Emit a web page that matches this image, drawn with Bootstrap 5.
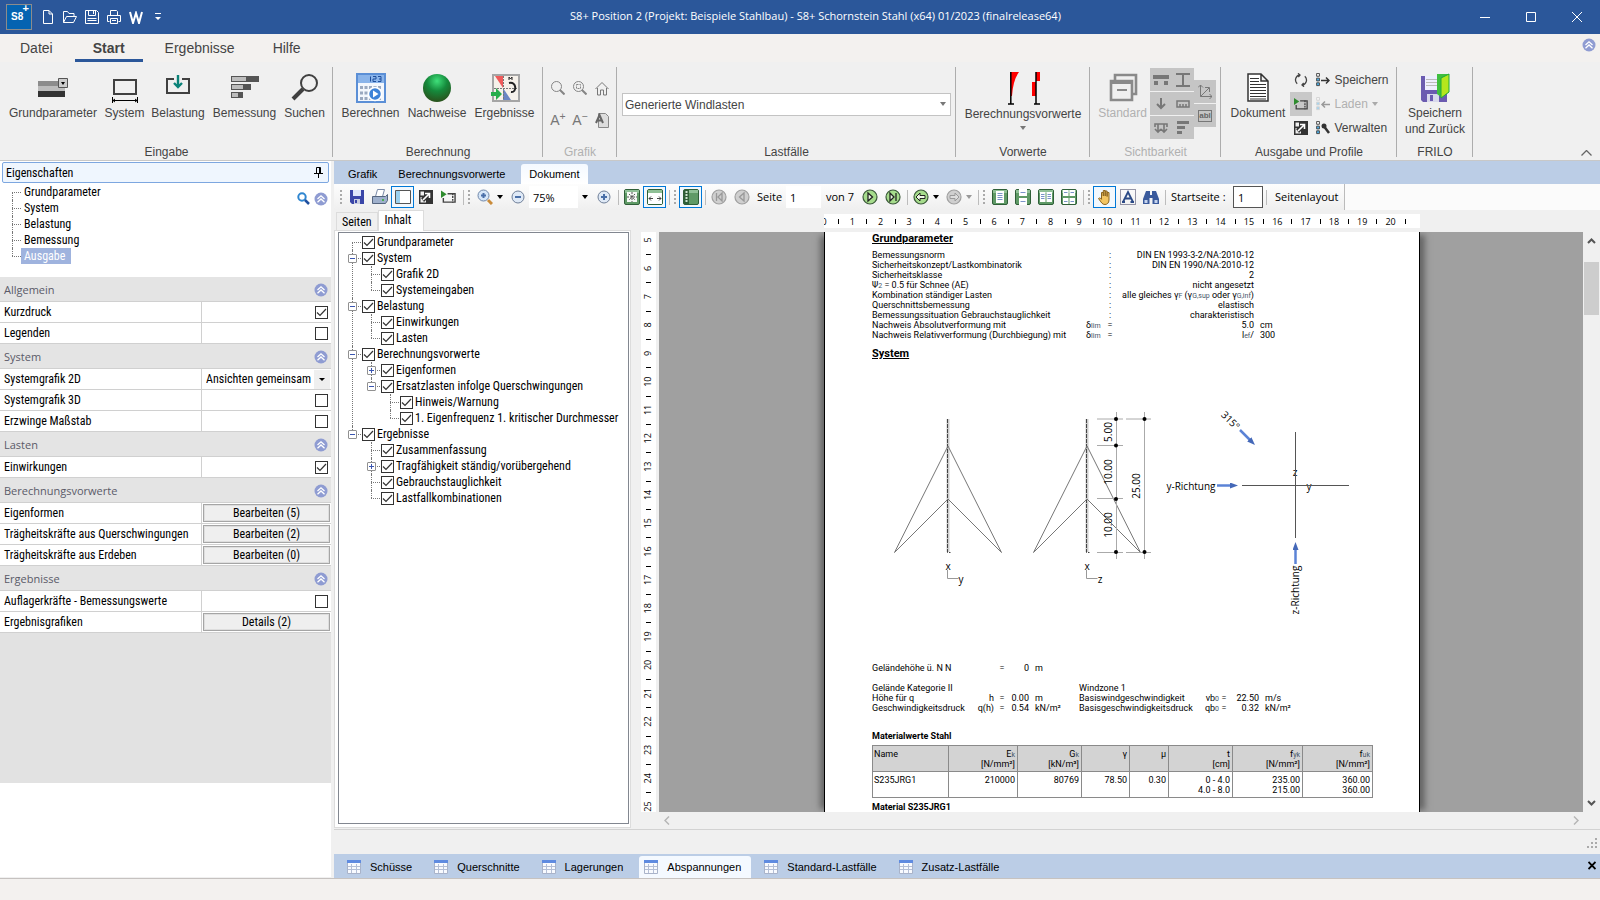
<!DOCTYPE html>
<html lang="de">
<head>
<meta charset="utf-8">
<meta name="viewport" content="width=device-width, initial-scale=1">
<title>S8+ Schornstein Stahl</title>
<link href="https://cdn.jsdelivr.net/npm/bootstrap@5.3.0/dist/css/bootstrap.min.css" rel="stylesheet">
<script src="https://cdn.jsdelivr.net/npm/bootstrap@5.3.0/dist/js/bootstrap.bundle.min.js" defer></script>
<style>
:root{--ui:"Roboto Condensed","Liberation Sans",sans-serif;--seg:"Open Sans","Noto Sans",sans-serif;--rib:"Liberation Sans",Arial,sans-serif}
body{background:#f0f0f0;color:#000;font:12px/16px var(--ui)}
svg{display:block;flex:none}
button{color:inherit;font:inherit}
a{color:inherit;text-decoration:none}
.plain{border:0;background:none;padding:0}
.chk{appearance:none;width:13px;height:13px;border:1px solid #333;background:#fff;margin:0;flex:none}
.chk:checked{background:#fff url("data:image/svg+xml,%3Csvg xmlns='http://www.w3.org/2000/svg' viewBox='0 0 11 11'%3E%3Cpath d='M1 5.5l3 3 6-6.5' fill='none' stroke='%23333' stroke-width='1.2'/%3E%3C/svg%3E")}
/* title */
.titlebar{height:34px;background:#2b579a;color:#fff}
.titlebar .plain{width:22px;height:22px;display:grid;place-items:center;color:#fff}
.app-logo{width:26px;height:26px;background:#0563b1;border:1px solid #8c8c8c;margin:0 5px 0 6px;font:bold 10px/24px var(--rib)}
.app-logo sup{position:absolute;right:2px;top:-3px;font-size:11px;line-height:12px}
.win-title{font:11px/32px var(--seg);height:34px}
.titlebar .win{width:46px;height:34px}
/* ribbon tabs */
.rtabs{height:28px;background:#f3f1ef;padding-left:4px;gap:6px;font:14px/28px var(--rib);color:#444}
.rtabs a{padding:0 16px;height:28px;position:relative}
.rtabs a.on{font-weight:bold;padding:0 18px;box-shadow:inset 0 -3px #2b579a}
/* ribbon */
.ribbon{height:99px;border-bottom:1px solid #c8c8c8;font:12px/16px var(--rib);color:#444}
.rgroup{display:flex;flex-direction:column;position:relative;padding-top:6px}
.rgroup::after{content:"";position:absolute;right:0;top:5px;height:90px;width:1px;background:#adadad}
.rbody{height:76px;display:flex;gap:6px;justify-content:center}
.rcap{text-align:center;line-height:16px}
.rbtn{border:0;background:none;padding:0;display:flex;flex-direction:column;align-items:center;white-space:nowrap}
.rbtn svg{margin:4px 0 1px}
.off{color:#b1b1b1}
.lf{height:23px;border:1px solid #c3c3c3;border-radius:0;background:#fff;color:#444;font:12px var(--rib);padding:0 2px;appearance:none}
.vis{display:grid;grid-template-columns:22px 22px;grid-auto-rows:23px;gap:1px 0;align-content:start}
.vis.single{grid-template-columns:22px;padding-top:12px}
.vis button{background:#c5c5c5;border:0;padding:0;display:grid;place-items:center}
.lines button{height:24px;border:0;background:none;padding:0;display:flex;align-items:center;gap:4px}
/* left panel */
.side{width:331px;background:#fff;margin-bottom:1px}
.side-head{height:21px;margin:1px 2px;border:1px solid #7da7e0;border-radius:2px;background:#eff6fe;padding:0 5px 0 3px}
.nodes,.nodes ul{list-style:none;margin:0;padding:0}
.nodes ul{margin-left:19px}
.nodes li{position:relative;line-height:16px}
.nodes li::before{content:"";position:absolute;left:0;top:8px;width:9px;border-top:1px dotted #777}
.nodes li::after{content:"";position:absolute;left:0;top:0;bottom:0;border-left:1px dotted #777}
.nodes li:last-child::after{bottom:auto;height:8px}
.nodes>li:first-child::after{top:8px}
.nodes label{display:flex;align-items:center;height:16px;padding-left:10px;gap:2px;white-space:nowrap}
.tgl{position:absolute;left:-4px;top:4px;width:9px;height:9px;border:1px solid #919191;border-radius:1px;background:#fff;padding:0;z-index:1}
.tgl::before{content:"";position:absolute;left:1px;top:3px;width:5px;height:1px;background:#3a55b0}
.tgl.plus::after{content:"";position:absolute;left:3px;top:1px;width:1px;height:5px;background:#3a55b0}
.side-tree a{display:inline-block;margin-left:9px;padding:0 6px 0 3px}
.side-tree a.on{background:#9fb3de;color:#fff}
.ghead{height:25px;background:#e4e4e4;border-bottom:1px solid #d0d0d0;padding:1px 3px 0 4px;font:11px/24px var(--seg);color:#5a5a68}
.prow{height:21px;border-bottom:1px solid #d0d0d0}
.pname{width:202px;border-right:1px solid #d0d0d0;padding-left:4px;line-height:20px}
.pval{display:flex;align-items:center;justify-content:flex-end;padding:1px}
.pval .chk{margin-right:2px}
.pval button{width:100%;height:18px;border:1px solid #a5a5a5;background:#efefef;box-shadow:inset 0 0 0 1px #dedede;padding:0;line-height:16px}
.pval select{appearance:none;border:0;width:100%;height:19px;padding:0 0 0 3px;font:12px var(--ui);background:#fff url("data:image/svg+xml,%3Csvg xmlns='http://www.w3.org/2000/svg' viewBox='0 0 16 19'%3E%3Cpath fill='%23efefef' d='M0 0h16v19H0z'/%3E%3Cpath d='M5 8h6l-3 3z'/%3E%3C/svg%3E") right/16px 19px no-repeat}
.side-rest{height:150px;background:#e2e2e2}
/* work area */
.dtabs{height:23px;background:#bbcde6;padding:3px 0 0 6px;font:11px/20px var(--rib)}
.dtabs a{padding:0 8px;margin-right:7px}
.dtabs a.on{background:linear-gradient(#f4f9ff,#fff);border-radius:3px 3px 0 0;margin:0 0 0 1px}
.tbar{height:26px;width:1011px;background:linear-gradient(#fdfdfd,#efefef);border-right:1px solid #bbb;font:11px/24px var(--seg);padding-left:6px;white-space:nowrap}
.tbar>*{flex:none}
.tstrip{background:#fbfbfb}
.ti{width:23px;height:22px;border:0;background:none;padding:0;display:grid;place-items:center}
.ti.on{border:1px solid #0078d7;background:#f2f8fd}
.grip{width:2px;height:15px;background:repeating-linear-gradient(#aaa 0 2px,transparent 2px 4px);margin:0 3px}
.bar{width:1px;height:15px;background:#bcbcbc;margin-left:3px;margin-right:1px}
.tc{margin:0 3px 0 1px}
.tin{border:0;background:#fff;height:22px;padding:0 4px;font:11px var(--seg)}
.cpane{width:298px;padding:0 1px 1px 0}
.ctabs{height:20px;padding-left:2px;align-items:flex-end}
.ctabs a{border:1px solid #dcdcdc;border-bottom:0;padding:0 5px;height:18px;line-height:18px}
.ctabs a.on{background:#fff;padding:0 12px 0 6px;margin-bottom:-1px;z-index:1;height:21px}
.cbox{border:1px solid #dcdcdc;background:#fff;padding:1px 1px 3px 3px}
.cinner{height:100%;border:1px solid #828790;padding:1px 0 0 13px}
.prev{display:grid;grid-template-columns:15px minmax(0,1fr) 17px;grid-template-rows:22px minmax(0,1fr) 17px;column-gap:0;margin-left:9px}
.prev text{font:9px var(--seg)}
.view{background:#a0a0a0;overflow:hidden;margin-left:3px;padding-left:2px}
.sheet{width:596px;margin:0 auto;background:#fff;border:solid #000;border-width:0 1px;box-shadow:8px 0 6px -3px #666,-8px 0 6px -4px #666;padding:1px 47px 0;min-height:100%;font:9px/10px Roboto,sans-serif}
.sheet h2{font:bold 11px/12px Roboto,sans-serif;text-decoration:underline;margin:0}
.sheet h3{font:bold 9px/12px Roboto,sans-serif;margin:0}
.sheet table{table-layout:fixed;border-collapse:collapse}
.sheet td,.sheet th{padding:0;white-space:nowrap;font-weight:400;vertical-align:top;height:10px}
.sheet sub{font-size:7px;line-height:0;color:#456;bottom:0}
.mat{width:500px}
.sheet .mat th,.sheet .mat td{border:1px solid #8a8a8a;padding:3px 2px 1px;height:26px;text-align:right}
.sheet .mat th{background:#d3d3d3}
.sheet .mat th:first-child,.sheet .mat td:first-child{text-align:left;padding-left:1px}
.dia text{font:10px var(--seg)}
.thumb{height:53px;background:#cdcdcd;margin:0 1px;width:15px}
.btabs{height:24px;background:#bbcde6;padding-left:2px;font:11px/22px var(--rib)}
.btabs a{display:flex;align-items:center;gap:9px;padding:0 11px 0 11px;height:22px}
.btabs a.on{background:#f4f9ff;border-radius:3px 3px 0 0;padding:0 10px 0 5px;margin:0 2px 0 5px}
.statusbar{height:22px;border-top:1px solid #c6c2c0;background:#f3f1ef}
</style>
</head>
<body class="vh-100 d-flex flex-column overflow-hidden">
<svg width="0" height="0" class="position-absolute">
<symbol id="up" viewBox="0 0 14 14"><circle cx="7" cy="7" r="6.500" fill="#8f9cd2"/><path d="M3.500 7L7 3.800 10.500 7M3.500 10.300L7 7l3.500 3.300" fill="none" stroke="#fff" stroke-width="1.300"/></symbol>
<symbol id="tab" viewBox="0 0 14 14"><path fill="#f8fafe" stroke="#a9b3c9" d="M.5.5h13v13H.5z"/><path fill="#5f8be0" d="M0 0h14v3H0z"/><path stroke="#b4bfd6" d="M1 6.500h12M1 9.500h12M4.500 4v9M9.500 4v9"/></symbol>
<symbol id="disk" viewBox="0 0 14 14"><path fill="#3a46a8" d="M0 0h14v14H2l-2-2z"/><path fill="#dfe6fa" d="M3 0h8v6H3z"/><path fill="#c9cde0" d="M4 9h6v5H4z"/><path fill="#3a46a8" d="M5 10h2v3H5z"/></symbol>
<symbol id="expand" viewBox="0 0 14 14"><path fill="#333" d="M0 0h14v14H0z"/><path fill="#f0f0f0" d="M1.500 1.500H5v4H1.500zM1.500 7H7v5.500H1.500z"/><path fill="#333" d="M2 8l4-3 3 3-4 4z"/><path d="M4 10l6-6M6 3.500h4.500V8" fill="none" stroke="#fff" stroke-width="1.600"/></symbol>
<symbol id="film" viewBox="0 0 16 14"><path d="M7 3.500h8v9H2.500V8" fill="none" stroke="#444" stroke-width="1.500"/><path stroke="#444" stroke-dasharray="2 1" stroke-width="1.500" d="M12.500 3v10"/><path fill="#2e8b2e" d="M0 0l6 4-6 4z"/></symbol>
<symbol id="gsq" viewBox="0 0 16 16"><rect x=".5" y=".5" width="15" height="15" rx="1.500" fill="#5f9a66" stroke="#2f5f38"/><path fill="#8fc096" d="M1 1h14v3H1z"/></symbol>
<symbol id="gc" viewBox="0 0 16 16"><circle cx="8" cy="8" r="7" fill="#a6dc8c" stroke="#3c5a3a" stroke-width="1.200"/></symbol>
<symbol id="nc" viewBox="0 0 16 16"><circle cx="8" cy="8" r="7" fill="#cfcfcf" stroke="#a0a0a0" stroke-width="1.200"/></symbol>
<symbol id="list3" viewBox="0 0 5 15"><path d="M.5.5h3v3h-3z" fill="#fff" stroke="currentColor"/><path d="M.5 5.500h3v3h-3zM.5 10.500h3v3h-3z" fill="#4db2ec" stroke="currentColor"/></symbol>
</svg>

<header class="titlebar d-flex align-items-center position-relative flex-shrink-0">
<div class="app-logo position-relative ps-1">S8<sup>+</sup></div>
<button class="plain" aria-label="Neu"><svg width="12" height="16" fill="none" stroke="#fff"><path d="M1.500 1.500H7L10.500 5v9.500h-9zM7 1.500V5h3.500"/></svg></button>
<button class="plain" aria-label="Öffnen"><svg width="16" height="14" fill="none" stroke="#fff"><path d="M1.500 12.500v-11h4L7 3.500h5v3M1.500 12.500l3-6h10l-3 6z"/></svg></button>
<button class="plain" aria-label="Sichern"><svg width="16" height="16" fill="none" stroke="#fff"><path d="M1.500 1.500h11l2 2v11h-13zM4.500 1.500v5h7v-5M9.500 2v3M3.500 9.500h9M3.500 11.500h9"/></svg></button>
<button class="plain" aria-label="Drucken"><svg width="16" height="16" fill="none" stroke="#fff"><path d="M4.500 6.500v-5h6l1 1v4M3.500 12.500h-2v-6h13v6h-2M4.500 9.500h7v5h-7zM6 11.500h4"/></svg></button>
<button class="plain" aria-label="Word"><svg width="14" height="13" fill="none" stroke="#fff" stroke-width="2"><path d="M1 1l3 11L7 2l3 10 3-11"/></svg></button>
<button class="plain" aria-label="Anpassen"><svg width="6" height="8" fill="#fff"><path d="M0 0h6v1H0zM0 4h6L3 7z"/></svg></button>
<div class="win-title flex-grow-1 text-center">S8+ Position 2 (Projekt: Beispiele Stahlbau) - S8+ Schornstein Stahl (x64) 01/2023 (finalrelease64)</div>
<button class="plain win" aria-label="Minimieren"><svg width="10" height="10"><path stroke="#fff" d="M0 5.500h10"/></svg></button>
<button class="plain win" aria-label="Maximieren"><svg width="10" height="10"><path stroke="#fff" fill="none" d="M.5.5h9v9h-9z"/></svg></button>
<button class="plain win" aria-label="Schließen"><svg width="10" height="10"><path stroke="#fff" d="M0 0l10 10M10 0L0 10"/></svg></button>
</header>

<nav class="rtabs d-flex flex-shrink-0 align-items-start">
<a href="#">Datei</a><a href="#" class="on">Start</a><a href="#">Ergebnisse</a><a href="#">Hilfe</a>
<button class="plain ms-auto me-1 mt-1" aria-label="Menüband"><svg width="14" height="14"><use href="#up"/></svg></button>
</nav>

<section class="ribbon d-flex flex-shrink-0 position-relative">
<div class="rgroup" style="width:333px"><div class="rbody">
<button class="rbtn" style="width:91px"><svg width="32" height="32"><path fill="#8c8c8c" d="M1 9h27v5H1z"/><path fill="#bcbcbc" d="M1 14h27v5H1z"/><path fill="#333" d="M1 19h27v6H1z"/><path fill="#ccc" stroke="#555" d="M21.500 6.500h9v9h-9z"/><path d="M24 10h4l-2 3z"/></svg>Grundparameter</button>
<button class="rbtn" style="width:40px"><svg width="32" height="32"><path fill="none" stroke="#404040" stroke-width="2" d="M5 8h22v14H5z"/><path stroke="#000" fill="none" d="M3 28.500h26M3.500 25v6M28.500 25v6M6 27l-2 1.500L6 30M26 27l2 1.500-2 1.500"/></svg>System</button>
<button class="rbtn" style="width:55px"><svg width="32" height="32"><path fill="none" stroke="#404040" stroke-width="2" d="M12 7H5v14h22V7h-7"/><path stroke="#0a8278" stroke-width="2.400" fill="none" d="M16 3v12M12 11l4 4 4-4"/></svg>Belastung</button>
<button class="rbtn" style="width:66px"><svg width="32" height="32"><path fill="#555" d="M2 4h28v6H2zM2 12h20v6H2zM2 20h12v6H2z"/><path fill="#bdbdbd" d="M3 5h14v4H3zM3 13h11v4H3zM3 21h6v4H3z"/></svg>Bemessung</button>
<button class="rbtn" style="width:42px"><svg width="32" height="32"><circle cx="20" cy="11" r="8" fill="none" stroke="#404040" stroke-width="2"/><path stroke="#404040" stroke-width="4" d="M14 17L4 27"/></svg>Suchen</button>
</div><div class="rcap">Eingabe</div></div>

<div class="rgroup" style="width:210px"><div class="rbody">
<button class="rbtn" style="width:60px"><svg width="32" height="32"><path fill="#f3f7fd" stroke="#5b8fd6" stroke-width="2" d="M2 2h28v28H2z"/><path fill="#8ab4ea" d="M3 3h26v8H3z"/><path stroke="#1f4f9c" fill="none" d="M15.500 9.500v-5M18 4.500h3v2.500h-3v2.500h3M23 4.500h3v5h-3M24 7h2"/><path stroke="#9aa9c0" stroke-width="3" stroke-dasharray="3 1.500" d="M5 15.500h22M5 21h22M5 26.500h22"/><circle cx="20" cy="22" r="6.500" fill="#3e83d8" stroke="#fff" stroke-width="1.500"/><path fill="#fff" d="M18 18.500l5.500 3.500-5.500 3.500z"/></svg>Berechnen</button>
<button class="rbtn" style="width:61px"><svg width="32" height="32"><defs><radialGradient id="gg" cx=".5" cy=".25" r=".8"><stop offset="0" stop-color="#3fe07a"/><stop offset=".45" stop-color="#158a3c"/><stop offset="1" stop-color="#2c4a18"/></radialGradient></defs><circle cx="16" cy="16" r="14" fill="url(#gg)"/></svg>Nachweise</button>
<button class="rbtn" style="width:62px"><svg width="32" height="32"><path fill="#f6f1ea" stroke="#a5a5a5" stroke-width="2" d="M4 3h26v26H4z"/><path fill="#ef5a5a" d="M6 4h8v12z"/><path fill="#6a86c4" d="M14 16v12h8z"/><path stroke="#777" stroke-dasharray="2 1" d="M5 16.500h24M14.500 4v24"/><path stroke="#222" stroke-width="2" fill="none" d="M20 11c8-2 8 10 2 9"/><path stroke="#222" fill="none" d="M20 8V5l1.500 2L23 5v3"/><path fill="#27ae4c" d="M2 20h5v-4l6 6-6 6v-4H2z"/></svg>Ergebnisse</button>
</div><div class="rcap">Berechnung</div></div>

<div class="rgroup off" style="width:74px"><div class="rbody">
<div class="d-grid" style="grid-template:32px 32px/22px 22px 22px;place-items:center;padding-top:4px;height:68px">
<button class="plain" aria-label="Zoom"><svg width="14" height="14" fill="none" stroke="#858585"><circle cx="5.500" cy="5.500" r="5"/><path stroke-width="2" d="M9 9l4.500 4.500"/></svg></button>
<button class="plain" aria-label="Zoom Fenster"><svg width="14" height="14" fill="none" stroke="#858585"><circle cx="5.500" cy="5.500" r="5"/><path stroke-width="2" d="M9 9l4.500 4.500"/><path stroke-dasharray="2 1" d="M3.500 3.500h4v4h-4z"/></svg></button>
<button class="plain" aria-label="Alles"><svg width="14" height="15" fill="none" stroke="#777"><path d="M.5 8L7 1.500 13.500 8M2.500 7v7h3V9h3v5h3V7"/></svg></button>
<button class="plain" aria-label="Schrift größer" style="color:#777;font-size:14px;line-height:16px">A<sup>+</sup></button>
<button class="plain" aria-label="Schrift kleiner" style="color:#777;font-size:14px;line-height:16px">A<sup>−</sup></button>
<button class="plain" aria-label="Schrift"><svg width="14" height="15"><path fill="#ddd" stroke="#888" d="M3.500.5h7l3 3v11h-10z"/><path d="M1 10l3.500-8L8 10M2.500 7.500h4" fill="none" stroke="#666" stroke-width="2"/></svg></button>
</div></div><div class="rcap">Grafik</div></div>

<div class="rgroup flex-grow-1"><div class="rbody px-1">
<div class="w-100 position-relative" style="padding:25px 1px 0 1px"><select class="lf w-100" aria-label="Lastfälle"><option>Generierte Windlasten</option></select><svg class="position-absolute" style="right:6px;top:34px" width="6" height="4" fill="#777"><path d="M0 0h6L3 4z"/></svg></div>
</div><div class="rcap">Lastfälle</div></div>

<div class="rgroup" style="width:134px"><div class="rbody">
<button class="rbtn"><svg width="34" height="33"><path fill="red" d="M5 0h8q-6 8-7 24H5z"/><path fill="red" d="M26 10h4v14h-4zM30 0h4v9h-4z"/><path stroke="#000" stroke-width="1.500" d="M4.800 0v32M2 32h6M30 0v32M28 32h6"/></svg>Berechnungsvorwerte<svg class="mt-1" width="6" height="4" fill="#777"><path d="M0 0h6L3 4z"/></svg></button>
</div><div class="rcap">Vorwerte</div></div>

<div class="rgroup off" style="width:131px"><div class="rbody" style="gap:0">
<button class="rbtn off" style="width:55px"><svg width="32" height="32" fill="none" stroke="#8a8a8a" stroke-width="2.600"><path d="M8 8V3h21v19h-5"/><path fill="#f0f0f0" d="M4 9h21v19H4z"/><path d="M4 11h21M10 18h10" stroke-width="2"/></svg>Standard</button>
<div class="vis">
<button aria-label="Lager"><svg width="16" height="12" fill="#777"><path d="M0 1h16v4H0zM1 7h4v4H1zM11 7h4v4h-4z"/></svg></button>
<button aria-label="Profil"><svg width="16" height="16" fill="none" stroke="#777" stroke-width="2"><path d="M1 2h14M1 14h14M8 2v12"/></svg></button>
<button aria-label="Last"><svg width="10" height="12" fill="none" stroke="#777" stroke-width="2"><path d="M5 0v10M1 6l4 4 4-4"/></svg></button>
<button aria-label="Maß"><svg width="14" height="8" fill="none" stroke="#777" stroke-width="1.500"><path d="M1 1h12v6H1zM4 4v3M7 4v3M10 4v3"/></svg></button>
<button aria-label="Auflager"><svg width="14" height="12" fill="none" stroke="#777" stroke-width="1.600"><path d="M4 11V2h6v9M1 7l3 3 3-3M7 7l3 3 3-3M1 5V2h3M13 5V2h-3"/></svg></button>
<button aria-label="Balken"><svg width="12" height="13" fill="#777"><path d="M0 0h12v3H0zM0 5h8v3H0zM0 10h5v3H0z"/></svg></button>
</div>
<div class="vis single">
<button aria-label="Achsen"><svg width="14" height="14" fill="none" stroke="#777"><path d="M2.500 0v11.500H14M2.500 11.500L11 3M7 2.500h4.500V7M0 2.500L2.500 0 5 2.500M11.500 9l2.500 2.500-2.500 2.500"/></svg></button>
<button aria-label="Text"><span style="border:1px solid #777;font:bold 8px/10px var(--rib);color:#666">abl</span></button>
</div>
</div><div class="rcap">Sichtbarkeit</div></div>

<div class="rgroup" style="width:176px"><div class="rbody" style="gap:0">
<button class="rbtn" style="width:57px"><svg width="32" height="32"><path fill="#fff" stroke="#333" stroke-width="1.500" d="M6 2h13l7 7v20H6zM19 2v7h7"/><path stroke="#333" d="M8 6.500h9M8 9.500h9M8 12.500h16M8 15.500h16M8 18.500h16M8 21.500h16M8 24.500h16M8 27h16"/></svg>Dokument</button>
<div class="lines mx-1">
<button class="px-1" aria-label="Aktualisieren"><svg width="14" height="14" fill="none" stroke="#444" stroke-width="1.300"><path d="M5.500 1.800a5.300 5.300 0 0 0-2.300 9M8.500 12.200a5.300 5.300 0 0 0 2.300-9M4 .3l2 1.700L4.300 4M10 13.700L8 12l1.700-2"/></svg></button>
<button class="px-1" aria-label="Vorschau" style="background:#c8c8c8"><svg width="14" height="14"><use href="#film"/></svg></button>
<button class="px-1" aria-label="Vollbild"><svg width="14" height="14"><use href="#expand"/></svg></button>
</div>
<div class="lines">
<button><svg width="14" height="14"><use href="#list3" width="5" height="14"/><path d="M5 7.500h8M10 4.500l3 3-3 3" fill="none" stroke="#333" stroke-width="1.500"/></svg>Speichern</button>
<button class="off"><svg width="14" height="14" opacity=".45"><use href="#list3" width="5" height="14"/><path d="M14 7.500H6M9 4.500l-3 3 3 3" fill="none" stroke="#333" stroke-width="1.500"/></svg>Laden<svg width="6" height="4" fill="#aaa"><path d="M0 0h6L3 4z"/></svg></button>
<button><svg width="14" height="14"><use href="#list3" width="5" height="14"/><path d="M7 4l6 8" stroke="#333" stroke-width="2.500"/><circle cx="8" cy="5" r="2.500" fill="#333"/></svg>Verwalten</button>
</div>
</div><div class="rcap">Ausgabe und Profile</div></div>

<div class="rgroup" style="width:76px"><div class="rbody">
<button class="rbtn"><svg width="32" height="32"><path fill="#6b5bb0" d="M2 4h26v26H4l-2-2z"/><path fill="#eef" d="M6 4h14v14H6z"/><path stroke="#bbb" d="M7 7.500h12M7 10.500h12M7 13.500h12"/><path fill="#d8d8ec" d="M8 22h12v8H8z"/><path fill="#6b5bb0" d="M11 23h3v6h-3z"/><path fill="#3fbf3f" d="M18 2h12v18l-8 5-4-3z"/><path fill="#b5e61d" stroke="#1faa3a" d="M22 6l8-4v18l-8 6z"/></svg>Speichern<span>und Zurück</span></button>
</div><div class="rcap">FRILO</div></div>
<div style="width:127px" class="d-flex align-items-end justify-content-end pe-2 pb-1"><svg width="11" height="6" fill="none" stroke="#666" stroke-width="1.300"><path d="M.5 5.500l5-5 5 5"/></svg></div>
</section>

<main class="d-flex flex-grow-1" style="min-height:0">
<aside class="side flex-shrink-0">
<div class="side-head d-flex align-items-center justify-content-between">Eigenschaften<svg width="9" height="11" fill="none" stroke="#000"><path d="M2.500 6V.5h4V6M0 6.500h9M4.500 7v4M5.500 1v5"/></svg></div>
<div class="d-flex" style="height:93px;padding:0 3px 0 12px">
<ul class="nodes side-tree flex-grow-1"><li><a href="#">Grundparameter</a></li><li><a href="#">System</a></li><li><a href="#">Belastung</a></li><li><a href="#">Bemessung</a></li><li><a href="#" class="on">Ausgabe</a></li></ul>
<div class="d-flex gap-1 pt-1 mt-1 align-items-start"><svg width="13" height="13" fill="none"><circle cx="5" cy="5" r="3.700" stroke="#2f86d0" stroke-width="2"/><path d="M8 8l4 4" stroke="#1f4fa0" stroke-width="2.500"/></svg><svg width="14" height="14"><use href="#up"/></svg></div>
</div>
<div id="props"></div>
<div class="side-rest"></div>
</aside>

<div class="d-flex flex-column flex-grow-1" style="margin-left:3px;min-width:0">
<nav class="dtabs d-flex"><a href="#" class="ps-2">Grafik</a><a href="#" style="padding-left:6px">Berechnungsvorwerte</a><a href="#" class="on">Dokument</a></nav>
<div class="tstrip"><div class="tbar d-flex align-items-center">
<i class="grip ms-0"></i>
<button class="ti" aria-label="Speichern"><svg width="14" height="14"><use href="#disk"/></svg></button>
<button class="ti" aria-label="Drucken"><svg width="16" height="16"><path fill="#fff" stroke="#7a8aa8" d="M5.500.5h7l-2 7h-7z"/><path fill="#9fb0cc" stroke="#55657f" d="M.5 7.500h13l2-2v6l-2 3H.5z"/><path fill="#4caf50" d="M10 10h2v2h-2z"/></svg></button>
<button class="ti on" aria-label="Navigation"><svg width="16" height="14"><path fill="#fff" stroke="#555" d="M.5.5h15v13H.5z"/><path fill="#9ad0ee" d="M1 1h4v12H1z"/></svg></button>
<button class="ti" aria-label="Vollbild"><svg width="14" height="14"><use href="#expand"/></svg></button>
<button class="ti" aria-label="Vorschau"><svg width="15" height="14"><use href="#film"/></svg></button>
<i class="bar"></i><i class="grip"></i>
<button class="ti" aria-label="Zoom"><svg width="16" height="16"><circle cx="6.500" cy="6.500" r="5.500" fill="#d6e6f8" stroke="#6f86a8"/><path stroke="#4a6fa8" stroke-width="2" d="M4 6.500h5M6.500 4v5"/><path stroke="#c98b3a" stroke-width="3" d="M11 11l4 4"/></svg></button>
<svg class="tc" width="6" height="4"><path d="M0 0h6L3 4z"/></svg>
<button class="ti" aria-label="Kleiner"><svg width="14" height="14"><circle cx="7" cy="7" r="6" fill="#dfe9f6" stroke="#6f7f98"/><path stroke="#4a6fa8" stroke-width="2" d="M4 7h6"/></svg></button>
<input class="tin" style="width:49px" value="75%" aria-label="Zoomfaktor">
<svg class="mx-1" width="6" height="4"><path d="M0 0h6L3 4z"/></svg>
<button class="ti" aria-label="Größer"><svg width="14" height="14"><circle cx="7" cy="7" r="6" fill="#dfe9f6" stroke="#6f7f98"/><path stroke="#4a6fa8" stroke-width="2" d="M4 7h6M7 4v6"/></svg></button>
<i class="bar"></i>
<button class="ti" aria-label="Ganze Seite"><svg width="16" height="16"><use href="#gsq"/><path fill="#f4f8f4" d="M3 3h10v10H3z"/><path stroke="#555" fill="none" stroke-dasharray="2 1" d="M8 3v10M3 8h10M5 5l6 6M11 5l-6 6"/></svg></button>
<button class="ti on" aria-label="Seitenbreite"><svg width="16" height="16"><use href="#gsq"/><path fill="#fff" d="M1 4h14v11H1z"/><path fill="none" stroke="#444" d="M2 9.500h4M4 7.500l-2 2 2 2M14 9.500h-4M12 7.500l2 2-2 2"/></svg></button>
<i class="bar"></i><i class="grip"></i>
<button class="ti on" aria-label="Miniaturen"><svg width="16" height="16"><use href="#gsq"/><path fill="#2f5f38" d="M1 1h5v14H1z"/><path stroke="#cfe6d2" stroke-width="2" stroke-dasharray="2 1" d="M3.500 2v12"/></svg></button>
<i class="bar"></i>
<button class="ti" aria-label="Erste"><svg width="16" height="16"><use href="#nc"/><path fill="none" stroke="#999" stroke-width="1.300" d="M5.500 4v8M11 4v8L7 8z"/></svg></button>
<button class="ti" aria-label="Zurück"><svg width="16" height="16"><use href="#nc"/><path fill="none" stroke="#999" stroke-width="1.300" d="M10 4v8L5.500 8z"/></svg></button>
<label for="pg" style="width:33px;padding-left:4px">Seite</label><input id="pg" class="tin" style="width:35px" value="1">
<span style="width:37px;padding-left:5px">von 7</span>
<button class="ti" aria-label="Weiter"><svg width="16" height="16"><use href="#gc"/><path fill="#e8f8e0" stroke="#222" stroke-width="1.300" d="M6 4v8l4.500-4z"/></svg></button>
<button class="ti" aria-label="Letzte"><svg width="16" height="16"><use href="#gc"/><path fill="#e8f8e0" stroke="#222" stroke-width="1.300" d="M5 4v8l4-4zM11 4v8"/></svg></button>
<i class="bar"></i>
<button class="ti" aria-label="Vorige Ansicht"><svg width="16" height="16"><use href="#gc"/><path fill="#f0fbe8" stroke="#222" d="M3 8l4-4v2.500h5v3H7V12z"/></svg></button>
<svg class="tc" width="6" height="4"><path d="M0 0h6L3 4z"/></svg>
<button class="ti" aria-label="Nächste Ansicht"><svg width="16" height="16"><use href="#nc"/><path fill="#ddd" stroke="#999" d="M13 8L9 4v2.500H4v3h5V12z"/></svg></button>
<svg class="tc" width="6" height="4" fill="#999"><path d="M0 0h6L3 4z"/></svg>
<i class="bar"></i><i class="grip"></i>
<button class="ti" aria-label="Einzelseite"><svg width="16" height="16"><use href="#gsq"/><path fill="#fff" d="M4 2h8v12H4z"/><path stroke="#7a94c8" d="M5.500 4.500h5M5.500 6.500h5M5.500 8.500h5M5.500 10.500h5"/></svg></button>
<button class="ti" aria-label="Fortlaufend"><svg width="16" height="16"><use href="#gsq"/><path fill="#fff" d="M4 0h8v7H4zM4 9h8v7H4z"/><path stroke="#7a94c8" d="M5.500 3.500h5M5.500 12.500h5"/></svg></button>
<button class="ti" aria-label="Doppelseite"><svg width="16" height="16"><use href="#gsq"/><path fill="#fff" d="M2 3h5.500v10H2zM8.500 3H14v10H8.500z"/><path stroke="#7a94c8" d="M3 5.500h3.500M3 7.500h3.500M3 9.500h3.500M9.500 5.500H13M9.500 7.500H13M9.500 9.500H13"/></svg></button>
<button class="ti" aria-label="Doppelt fortlaufend"><svg width="16" height="16"><use href="#gsq"/><path fill="#fff" d="M2 1h5.500v6H2zM8.500 1H14v6H8.500zM2 9h5.500v6H2zM8.500 9H14v6H8.500z"/><path stroke="#7a94c8" d="M3 3.500h3.500M9.500 3.500H13M3 12.500h3.500M9.500 12.500H13"/></svg></button>
<i class="bar"></i><i class="grip"></i>
<button class="ti on" aria-label="Hand"><svg width="15" height="16"><path fill="#f3c562" stroke="#8a6420" d="M4.500 9V3.500h1.800V7 1.500h1.900V7 2h1.900v5.500V3.500H12V11c0 3-2 4.500-4 4.500-3 0-3.500-2-6.500-6 1-1 2-.5 3 .8z"/></svg></button>
<button class="ti" aria-label="Textauswahl"><svg width="16" height="16"><path fill="none" stroke="#335" stroke-dasharray="1 1" d="M.5.5h15v15H.5z"/><path fill="none" stroke="#2b4a86" stroke-width="1.800" d="M3 13L8 3l5 10M5 9.500h6M2 13h3M10.500 13H14"/></svg></button>
<button class="ti" aria-label="Suchen"><svg width="16" height="14" fill="#3a5a9c"><path d="M3 1h4v4h2V1h4l3 8v5H9.500V8h-3v6H0V9z"/><path fill="#c5d4ee" d="M1.500 10h3v3h-3zM11.500 10h3v3h-3z"/></svg></button>
<i class="bar"></i>
<label for="st" style="width:66px;padding-left:4px">Startseite :</label><input id="st" class="tin" style="width:30px;border:1px solid #555" value="1">
<i class="bar"></i><button class="plain" style="padding-left:7px">Seitenlayout</button>
</div></div>

<div class="d-flex flex-grow-1 border-bottom" style="min-height:0;border-color:#d2d2d2!important">
<div class="cpane d-flex flex-column flex-shrink-0">
<nav class="ctabs d-flex"><a href="#">Seiten</a><a href="#" class="on">Inhalt</a></nav>
<div class="cbox flex-grow-1"><div class="cinner">
<ul class="nodes" id="toc"></ul>
</div></div>
</div>
<div class="prev flex-grow-1">
<div></div><div style="padding:4px 0 4px 5px"><svg id="hr" class="mx-auto bg-white" width="596" height="14"></svg></div><div></div>
<svg id="vr" class="bg-white" width="15" height="100%"></svg>
<div class="view"><article class="sheet">
<h2>Grundparameter</h2>
<table style="width:500px;margin:5px 0 8px"><colgroup><col style="width:214px"><col style="width:18px"><col style="width:12px"><col style="width:138px"><col></colgroup>
<tbody id="gp"></tbody></table>
<h2>System</h2>
<svg class="dia" width="500" height="303" viewBox="872 360 500 303">
<defs><marker id="ah" markerWidth="8" markerHeight="8" refX="1" refY="3" orient="auto" markerUnits="userSpaceOnUse"><path d="M0 0l8 3-8 3z" fill="#4468b8"/></marker></defs>
<g id="mast" fill="none" stroke="#777"><path stroke="#ccc" stroke-width="3" d="M948 419v133"/><path stroke="#444" stroke-dasharray="4 1" d="M947.500 419v133.500h3"/><path d="M948 446l-53.500 106.500L948 499l53.500 53.500z"/><path stroke="#999" d="M947.500 570v8.500h11"/></g>
<use href="#mast" x="139"/>
<g text-anchor="middle"><text x="948" y="570">x</text><text x="961" y="583">y</text><text x="1087" y="570">x</text><text x="1100" y="583">z</text></g>
<path fill="none" stroke="#aaa" d="M1097 419h26M1097 445.500h26M1097 498.500h26M1097 552.500h26M1126 419h25M1126 552.500h25M1116.500 412v147M1144.500 412v147"/>
<g fill="#000"><circle cx="1116" cy="419" r="2"/><circle cx="1116" cy="445.500" r="2"/><circle cx="1116" cy="499" r="2"/><circle cx="1116" cy="552" r="2"/><circle cx="1144.500" cy="419" r="2"/><circle cx="1144.500" cy="552" r="2"/></g>
<g text-anchor="middle"><text transform="translate(1112 432) rotate(-90)">5.00</text><text transform="translate(1112 472) rotate(-90)">10.00</text><text transform="translate(1112 525) rotate(-90)">10.00</text><text transform="translate(1140 486) rotate(-90)">25.00</text>
<text transform="translate(1228 423) rotate(45)">315°</text><text x="1191" y="490">y-Richtung</text><text transform="translate(1299 590) rotate(-90)">z-Richtung</text><text x="1295" y="476">z</text><text x="1309" y="490">y</text></g>
<path stroke="#555" d="M1242 485.500h107M1295.500 432v106"/>
<g stroke="#5b83d6" stroke-width="2.500"><path marker-end="url(#ah)" d="M1217 485.500h14"/><path marker-end="url(#ah)" d="M1295.500 564v-15"/><path marker-end="url(#ah)" d="M1240 430l10 10"/></g>
</svg>
<table style="width:500px"><colgroup><col style="width:90px"><col style="width:32px"><col style="width:16px"><col style="width:19px"><col style="width:50px"><col style="width:113px"><col style="width:27px"><col style="width:10px"><col style="width:30px"><col></colgroup>
<tbody id="wind"></tbody></table>
<h3 style="margin:17px 0 3px">Materialwerte Stahl</h3>
<table class="mat"><colgroup><col style="width:76px"><col style="width:69px"><col style="width:64px"><col style="width:48px"><col style="width:39px"><col style="width:64px"><col style="width:70px"><col style="width:70px"></colgroup>
<thead><tr><th>Name</th><th>E<sub>k</sub><br>[N/mm²]</th><th>G<sub>k</sub><br>[kN/m³]</th><th>γ</th><th>µ</th><th>t<br>[cm]</th><th>f<sub>yk</sub><br>[N/mm²]</th><th>f<sub>uk</sub><br>[N/mm²]</th></tr></thead>
<tbody><tr><td>S235JRG1</td><td>210000</td><td>80769</td><td>78.50</td><td>0.30</td><td>0 - 4.0<br>4.0 - 8.0</td><td>235.00<br>215.00</td><td>360.00<br>360.00</td></tr></tbody></table>
<h3 style="margin-top:3px">Material S235JRG1</h3>
</article></div>
<div class="d-flex flex-column"><svg width="17" height="30" fill="none" stroke="#555" stroke-width="2"><path d="M5 11l3.500-3.500L12 11"/></svg><div class="thumb"></div><svg class="mt-auto" width="17" height="17" fill="none" stroke="#555" stroke-width="2"><path d="M5 6l3.500 3.500L12 6"/></svg></div>
<div></div><div class="d-flex justify-content-between align-items-center" style="padding:0 4px 0 8px"><svg width="6" height="9" fill="none" stroke="#b5b5b5" stroke-width="1.500"><path d="M5 .5l-4 4 4 4"/></svg><svg width="6" height="9" fill="none" stroke="#b5b5b5" stroke-width="1.500"><path d="M1 .5l4 4-4 4"/></svg></div><div></div>
</div>
</div>
<div class="d-flex justify-content-end align-items-end flex-shrink-0" style="height:24px;padding:0 2px 5px"><svg width="11" height="11" fill="#aaa"><path d="M8 0h2v2H8zM8 4h2v2H8zM8 8h2v2H8zM4 4h2v2H4zM4 8h2v2H4zM0 8h2v2H0z"/></svg></div>
<nav class="btabs d-flex align-items-end flex-shrink-0" id="bt"></nav>
</div>
</main>
<footer class="statusbar flex-shrink-0"></footer>

<script>
const $ = id => document.getElementById(id);

// property grid
const head = t => `<div class="ghead d-flex justify-content-between align-items-center"><span>${t}</span><button class="plain" aria-label="${t} einklappen"><svg width="14" height="14"><use href="#up"/></svg></button></div>`;
let n = 0;
const row = (t, kind, v) => {
  const id = 'p' + (++n);
  const c = kind === 'c' ? `<input type="checkbox" class="chk" id="${id}"${v ? ' checked' : ''}>`
    : kind === 's' ? `<select id="${id}"><option>${v}</option></select>` : `<button id="${id}">${v}</button>`;
  return `<div class="prow d-flex"><label class="pname" for="${id}">${t}</label><div class="pval flex-grow-1">${c}</div></div>`;
};
$('props').innerHTML = head('Allgemein') + row('Kurzdruck','c',1) + row('Legenden','c',0)
 + head('System') + row('Systemgrafik 2D','s','Ansichten gemeinsam') + row('Systemgrafik 3D','c',0) + row('Erzwinge Maßstab','c',0)
 + head('Lasten') + row('Einwirkungen','c',1)
 + head('Berechnungsvorwerte') + row('Eigenformen','b','Bearbeiten (5)') + row('Trägheitskräfte aus Querschwingungen','b','Bearbeiten (2)') + row('Trägheitskräfte aus Erdeben','b','Bearbeiten (0)')
 + head('Ergebnisse') + row('Auflagerkräfte - Bemessungswerte','c',0) + row('Ergebnisgrafiken','b','Details (2)');

// table of contents: [label, toggle, children]
const toc = [['Grundparameter'],['System','-',[['Grafik 2D'],['Systemeingaben']]],['Belastung','-',[['Einwirkungen'],['Lasten']]],
 ['Berechnungsvorwerte','-',[['Eigenformen','+'],['Ersatzlasten infolge Querschwingungen','-',[['Hinweis/Warnung'],['1. Eigenfrequenz 1. kritischer Durchmesser']]]]],
 ['Ergebnisse','-',[['Zusammenfassung'],['Tragfähigkeit ständig/vorübergehend','+'],['Gebrauchstauglichkeit'],['Lastfallkombinationen']]]];
const node = ([t, g, k]) => `<li>${g ? `<button class="tgl${g === '+' ? ' plus' : ''}" aria-label="${t} auf/zu"></button>` : ''}<label><input type="checkbox" class="chk" checked>${t}</label>${k ? `<ul>${k.map(node).join('')}</ul>` : ''}</li>`;
$('toc').innerHTML = toc.map(node).join('');

// document tables
const lim = 'δ<sub>lim</sub>';
$('gp').innerHTML = [['Bemessungsnorm','',':','DIN EN 1993-3-2/NA:2010-12',''],['Sicherheitskonzept/Lastkombinatorik','',':','DIN EN 1990/NA:2010-12',''],['Sicherheitsklasse','',':','2',''],
 ['Ψ<sub>2</sub> = 0.5 für Schnee (AE)','',':','nicht angesetzt',''],['Kombination ständiger Lasten','',':','alle gleiches γ<sub>F</sub> (γ<sub>G,sup</sub> oder γ<sub>G,inf</sub>)',''],['Querschnittsbemessung','',':','elastisch',''],
 ['Bemessungssituation Gebrauchstauglichkeit','',':','charakteristisch',''],['Nachweis Absolutverformung mit',lim,'=','5.0','cm'],['Nachweis Relativverformung (Durchbiegung) mit',lim,'=','l<sub>ef</sub>/','300']]
 .map(r => `<tr><td>${r[0]}</td><td>${r[1]}</td><td class="text-center">${r[2]}</td><td class="text-end">${r[3]}</td><td style="padding-left:6px">${r[4]}</td></tr>`).join('');
$('wind').innerHTML = [['Geländehöhe ü. N N','','=','0','m','','','','',''],['','','','','','','','','',''],['Gelände Kategorie II','','','','','Windzone 1','','','',''],
 ['Höhe für q','h','=','0.00','m','Basiswindgeschwindigkeit','vb<sub>0</sub>','=','22.50','m/s'],['Geschwindigkeitsdruck','q(h)','=','0.54','kN/m²','Basisgeschwindigkeitsdruck','qb<sub>0</sub>','=','0.32','kN/m²']]
 .map(r => '<tr>' + r.map((c, i) => `<td${[1,3,6,8].includes(i) ? ' class="text-end"' : i === 2 || i === 7 ? ' class="text-center"' : i === 4 || i === 9 ? ' style="padding-left:6px"' : ''}>${c}</td>`).join('') + '</tr>').join('');

// rulers, one centimetre = 28.33 px at 75 %
const cm = 28.33; let h = '', v = '';
for (let i = 0; i <= 20; i++) h += `<text x="${i * cm}" y="11" text-anchor="middle">${i}</text><path stroke="#000" d="M${Math.round(i * cm + 14) + .5} 5v5"/>`;
for (let i = 5; i <= 25; i++) { const y = 8 + (i - 5) * cm; v += `<text transform="translate(10 ${y}) rotate(-90)" text-anchor="middle">${i}</text><path stroke="#000" d="M5 ${Math.round(y + 14) + .5}h5"/>`; }
$('hr').innerHTML = h; $('vr').innerHTML = v;

$('bt').innerHTML = ['Schüsse','Querschnitte','Lagerungen','Abspannungen','Standard-Lastfälle','Zusatz-Lastfälle'].map(t => `<a href="#"${t === 'Abspannungen' ? ' class="on"' : ''}><svg width="14" height="14"><use href="#tab"/></svg>${t}</a>`).join('')
 + '<button class="plain ms-auto me-1 mb-2" aria-label="Schließen"><svg width="8" height="9"><path stroke="#000" stroke-width="1.800" d="M.5 1l7 7M7.500 1l-7 7"/></svg></button>';
</script>
</body>
</html>
